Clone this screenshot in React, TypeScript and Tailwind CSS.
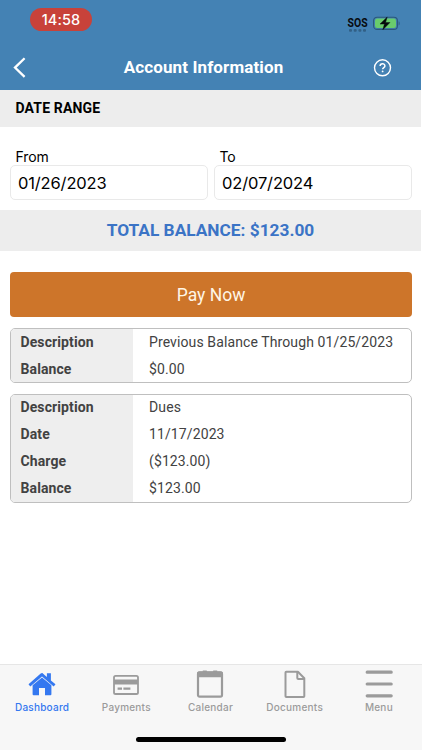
import React from "react";

type Row = { label: string; value: string };

const roboto = "font-[Roboto,sans-serif]";
const inter = "font-[Inter,sans-serif]";

function StatusBar() {
  return (
    <div className="flex h-[45px] items-start justify-between pl-[30px] pr-[21px] pt-2">
      <div className="flex h-[23px] w-[62px] items-center justify-center rounded-full bg-[#c8423a] pt-px text-[14.5px] font-medium leading-none tracking-[0.1px] text-white">
        14:58
      </div>
      <div className="flex gap-[4px] pt-[6px]">
        <div className="flex flex-col items-center">
          <svg width="22" height="19" viewBox="0 -1 22 19" overflow="visible">
            <text x="0.6" y="12" fontFamily="Roboto, sans-serif" fontWeight="700" fontSize="13.5" textLength="20" lengthAdjust="spacingAndGlyphs" fill="#080b0f">SOS</text>
            <g fill="#326086">
              <rect x="2" y="14" width="3" height="2.8" rx="1" />
              <rect x="6.7" y="14" width="3" height="2.8" rx="1" />
              <rect x="11.4" y="14" width="3" height="2.8" rx="1" />
              <rect x="16" y="14" width="3" height="2.8" rx="1" />
            </g>
          </svg>
        </div>
        <svg className="mt-px" width="27" height="17" viewBox="0 0 27 17">
          <rect x="0.6" y="2.2" width="23.8" height="12.2" rx="3.5" fill="none" stroke="#2b5879" strokeWidth="1.1" />
          <rect x="2" y="3.6" width="21" height="9.4" rx="2.2" fill="#69cc6d" />
          <path d="M25.7 6.3c1.2.5 1.2 3.7 0 4.2z" fill="#2b5879" />
          <path d="M14.2 2 7 9.1h4.4L9.8 14.8 17 7.5h-4.4z" fill="#05090c" stroke="#05090c" strokeWidth=".4" />
        </svg>
      </div>
    </div>
  );
}

function Header() {
  return (
    <header className={`h-[90px] bg-[#4482b4] ${inter}`}>
      <StatusBar />
      <div className="flex h-[45px] items-center justify-between pl-[13px] pr-[29px]">
        <svg width="20" height="22" viewBox="0 0 20 22">
          <path d="M11.6 1.2 2 10.6l9.6 9.2" fill="none" stroke="white" strokeWidth="2.3" />
        </svg>
        <h1 className={`${roboto} ml-[2px] whitespace-nowrap text-[17px] font-bold tracking-[0.12px] text-white`}>Account Information</h1>
        <svg width="20" height="20" viewBox="0 0 20 20" fill="none" stroke="white">
          <circle cx="10.5" cy="9.8" r="8" strokeWidth="1.4" />
          <path d="M8.1 8.1c0-3.1 4.8-3.1 4.8-.2 0 1.6-2.3 1.7-2.3 3.4" strokeWidth="1.5" />
          <circle cx="10.6" cy="13.4" r=".9" fill="white" stroke="none" />
        </svg>
      </div>
    </header>
  );
}

function DateField({ label, value }: { label: string; value: string }) {
  return (
    <label className={`flex flex-1 flex-col text-black ${inter}`}>
      <span className="h-[17px] pl-[5.5px] text-[14px] leading-[17px] tracking-[-0.1px]">{label}</span>
      <span className="flex h-[35px] items-center rounded-[5px] border border-[#e9e9e9] pl-[7px] pt-[2px] text-[16.5px] tracking-[-0.15px]">{value}</span>
    </label>
  );
}

function RecordCard({ rows }: { rows: Row[] }) {
  return (
    <dl className="overflow-hidden rounded-[5px] border border-[#bfbfbf] text-[14px] leading-[27.1px] text-[#424242]">
      {rows.map((row) => (
        <div key={row.label} className="flex h-[27.1px] first:-mt-[0.7px] last:-mb-[0.7px]">
          <dt className="w-[122px] shrink-0 bg-[#eeeeee] pl-[9.5px] font-bold tracking-[0.1px]">{row.label}</dt>
          <dd className="whitespace-nowrap pl-4 tracking-[0.11px]">{row.value}</dd>
        </div>
      ))}
    </dl>
  );
}

function HomeIcon() {
  return (
    <svg width="28" height="28" viewBox="0 0 28 28" fill="#3478f0">
      <path d="M14 7.4 4.6 15.3V24.3q0 1 1 1H11V18h6v7.3h5.4q1 0 1-1v-9z" />
      <path d="M14 2.8 18.9 7V3.3h4v7.1l4.6 3.9-1.8 2.1L14 6.4 2.3 16.4.5 14.3 12.7 3.6Q14 2.3 15.3 3.6z" />
    </svg>
  );
}

function CardIcon() {
  return (
    <svg width="28" height="28" viewBox="0 0 28 28" fill="#9b9b9b">
      <rect x="2" y="5.8" width="24" height="18.2" rx="1.6" fill="none" stroke="#9b9b9b" strokeWidth="1.8" />
      <path d="M2 9.4h24v5H2zM5.6 17.6h4.4v2.2H5.6zM11.4 17.6h7v2.2h-7z" />
    </svg>
  );
}

function CalendarIcon() {
  return (
    <svg width="28" height="28" viewBox="0 0 28 28" fill="#9b9b9b">
      <rect x="2" y="2.4" width="24" height="24.2" rx="1.6" fill="none" stroke="#9b9b9b" strokeWidth="2.2" />
      <path d="M1 3.2q0-1.8 1.8-1.8h4V.4h4v1h6.4v-1h4v1h4Q27 1.4 27 3.2v4H1z" />
    </svg>
  );
}

function DocumentIcon() {
  return (
    <svg width="28" height="28" viewBox="0 0 28 28" fill="none" stroke="#9b9b9b" strokeWidth="2" strokeLinejoin="round">
      <path d="M5.3 1.8h11.6l6.4 6.5v17.9q0 .8-.8.8H5.3q-.8 0-.8-.8V2.6q0-.8.8-.8z" />
      <path d="M16.3 2v6q0 1 1 1h6" />
    </svg>
  );
}

function MenuIcon() {
  return (
    <svg width="28" height="28" viewBox="0 0 28 28" stroke="#9b9b9b" strokeWidth="3.2" strokeLinecap="round">
      <path d="M2.2 2.2h24M2.2 14h24M2.2 25.8h24" />
    </svg>
  );
}

const tabs = [
  { label: "Dashboard", icon: <HomeIcon /> },
  { label: "Payments", icon: <CardIcon /> },
  { label: "Calendar", icon: <CalendarIcon /> },
  { label: "Documents", icon: <DocumentIcon /> },
  { label: "Menu", icon: <MenuIcon /> },
];

export default function App() {
  return (
    <div className={`flex h-[750px] w-[422px] flex-col overflow-hidden bg-white ${roboto}`}>
      <main className="flex w-[421px] flex-1 flex-col">
        <Header />
        <h2 className="h-[37px] bg-[#ededed] pl-[15.5px] text-[14px] font-bold leading-[37px] tracking-[0.15px] text-black">DATE RANGE</h2>
        <div className="mt-[21px] flex gap-[6px] pl-2.5 pr-[9px]">
          <DateField label="From" value="01/26/2023" />
          <DateField label="To" value="02/07/2024" />
        </div>
        <div className="mt-[10px] flex h-[41px] items-center justify-center bg-[#ededed] pt-px text-[17.3px] font-bold text-[#3b74c6]">TOTAL BALANCE: $123.00</div>
        <div className="flex flex-col pl-2.5 pr-[9px] pt-[21.4px]">
          <button className="mb-[11px] h-[45px] rounded-[4px] bg-[#cd752a] text-[17.5px] text-[#fff6e6]">Pay Now</button>
          <RecordCard
            rows={[
              { label: "Description", value: "Previous Balance Through 01/25/2023" },
              { label: "Balance", value: "$0.00" },
            ]}
          />
          <div className="h-[10.4px]" />
          <RecordCard
            rows={[
              { label: "Description", value: "Dues" },
              { label: "Date", value: "11/17/2023" },
              { label: "Charge", value: "($123.00)" },
              { label: "Balance", value: "$123.00" },
            ]}
          />
        </div>
      </main>
      <nav className={`flex h-[86px] flex-col border-t border-[#e6e6e6] bg-[#f7f7f7] ${inter}`}>
        <div className="grid h-[71px] w-[421px] grid-cols-5 pt-[5px]">
          {tabs.map((tab) => (
            <div key={tab.label} className="flex flex-col items-center text-[10px] font-medium leading-[14px] tracking-[0.24px] text-[#9b9b9b] first:text-[#3478f0]">
              {tab.icon}
              <span className="mt-[2px]">{tab.label}</span>
            </div>
          ))}
        </div>
        <div className="ml-[136px] mt-[1px] h-[5px] w-[150px] rounded-full bg-black" />
      </nav>
    </div>
  );
}
